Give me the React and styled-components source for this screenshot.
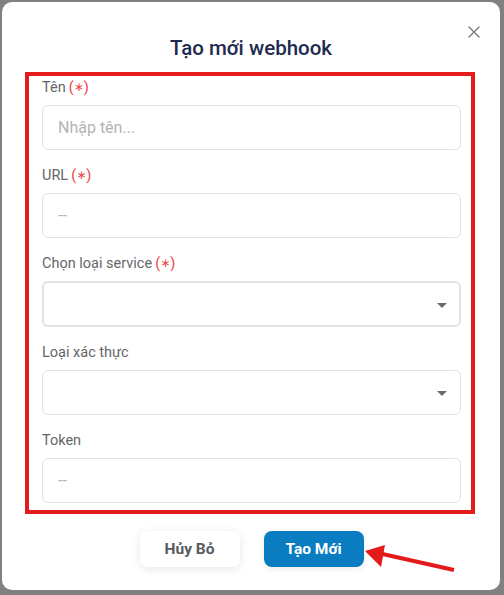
import React from "react";
import styled, { createGlobalStyle } from "styled-components";

const Global = createGlobalStyle`
  html, body { margin: 0; padding: 0; }
  body {
    background: #808080;
    font-family: Roboto, "Noto Sans", "Liberation Sans", sans-serif;
    width: 504px;
    height: 595px;
    overflow: hidden;
  }
  * { box-sizing: border-box; }
`;

const Page = styled.div`
  padding: 2px 0 0 2px;
`;

const Modal = styled.div`
  position: relative;
  width: 498px;
  height: 588px;
  background: #fff;
  border-radius: 10px;
  padding-top: 34px;
  display: flex;
  flex-direction: column;
`;

const CloseButton = styled.button`
  position: absolute;
  top: 21px;
  right: 17px;
  width: 18px;
  height: 18px;
  padding: 0;
  border: none;
  background: transparent;
  display: flex;
  align-items: center;
  justify-content: center;
  cursor: pointer;
`;

const Title = styled.h2`
  margin: 0;
  height: 24px;
  text-align: center;
  font-size: 20.5px;
  line-height: 24px;
  font-weight: 500;
  color: #1e2a4f;
`;

const Form = styled.div`
  margin: 12px 0 0 23px;
  width: 450px;
  border: 4px solid #e31b1b;
  padding: 2px 10px 7px 13px;
  display: flex;
  flex-direction: column;
  gap: 16px;
`;

const Field = styled.div`
  display: flex;
  flex-direction: column;
  gap: 7px;
`;

const Label = styled.label`
  display: block;
  height: 20px;
  font-size: 14.5px;
  line-height: 20px;
  color: #666;
  white-space: nowrap;
`;

const Req = styled.span`
  color: #ec4343;
  margin-left: 3px;
`;

const Star = styled.span`
  font-family: "DejaVu Sans", sans-serif;
  font-size: 12px;
  line-height: 1;
  position: relative;
  top: -1px;
`;

const Input = styled.input`
  display: block;
  width: 100%;
  height: 45px;
  border: 1px solid #e3e3e3;
  border-radius: 6px;
  padding: 0 15px;
  font-family: inherit;
  font-size: 16px;
  color: #333;
  outline: none;
  background: #fff;
  &::placeholder { color: #b3b3b3; }
`;

const SelectBox = styled.div`
  width: 100%;
  height: ${(p) => (p.$active ? "46px" : "45px")};
  border: ${(p) => (p.$active ? "2px solid #e2e2e2" : "1px solid #e3e3e3")};
  border-radius: 6px;
  display: flex;
  align-items: center;
  justify-content: flex-end;
  padding-right: ${(p) => (p.$active ? "12px" : "13px")};
`;

const Caret = styled.span`
  width: 0;
  height: 0;
  border-left: 5px solid transparent;
  border-right: 5px solid transparent;
  border-top: 5px solid #6b6b6b;
  margin-top: 2px;
`;

const Actions = styled.div`
  margin-top: 17px;
  display: flex;
  justify-content: center;
  gap: 24px;
  padding-left: 1px;
`;

const Button = styled.button`
  width: 100px;
  height: 36px;
  border-radius: 8px;
  border: none;
  font-family: inherit;
  font-size: 15.5px;
  font-weight: 700;
  cursor: pointer;
  background: ${(p) => (p.$primary ? "#0a7cc2" : "#fff")};
  color: ${(p) => (p.$primary ? "#fff" : "#555a63")};
  box-shadow: ${(p) =>
    p.$primary ? "0 2px 6px rgba(0,0,0,0.08)" : "0 2px 10px rgba(0,0,0,0.10)"};
`;

const Annotation = styled.svg`
  position: absolute;
  left: 0;
  top: 0;
  pointer-events: none;
`;

function Select({ active }) {
  return (
    <SelectBox $active={active}>
      <Caret />
    </SelectBox>
  );
}

function Required() {
  return (
    <Req>
      (<Star>∗</Star>)
    </Req>
  );
}

export default function App() {
  return (
    <>
      <Global />
      <Page>
        <Modal>
          <CloseButton aria-label="close">
            <svg width="12" height="12" viewBox="0 0 12 12">
              <path d="M1 1L11 11M11 1L1 11" stroke="#777" strokeWidth="1.4" strokeLinecap="round" />
            </svg>
          </CloseButton>
          <Title>Tạo mới webhook</Title>
          <Form>
            <Field>
              <Label>
                Tên<Required />
              </Label>
              <Input placeholder="Nhập tên..." />
            </Field>
            <Field>
              <Label>
                URL<Required />
              </Label>
              <Input placeholder="--" />
            </Field>
            <Field>
              <Label>
                Chọn loại service<Required />
              </Label>
              <Select active />
            </Field>
            <Field>
              <Label>Loại xác thực</Label>
              <Select />
            </Field>
            <Field>
              <Label>Token</Label>
              <Input placeholder="--" />
            </Field>
          </Form>
          <Actions>
            <Button>Hủy Bỏ</Button>
            <Button $primary>Tạo Mới</Button>
          </Actions>
          <Annotation width="498" height="588" viewBox="2 2 498 588">
            <line x1="454" y1="570" x2="378" y2="553" stroke="#e31b1b" strokeWidth="4" />
            <polygon points="365,551 385,545 381,567" fill="#e31b1b" />
          </Annotation>
        </Modal>
      </Page>
    </>
  );
}
